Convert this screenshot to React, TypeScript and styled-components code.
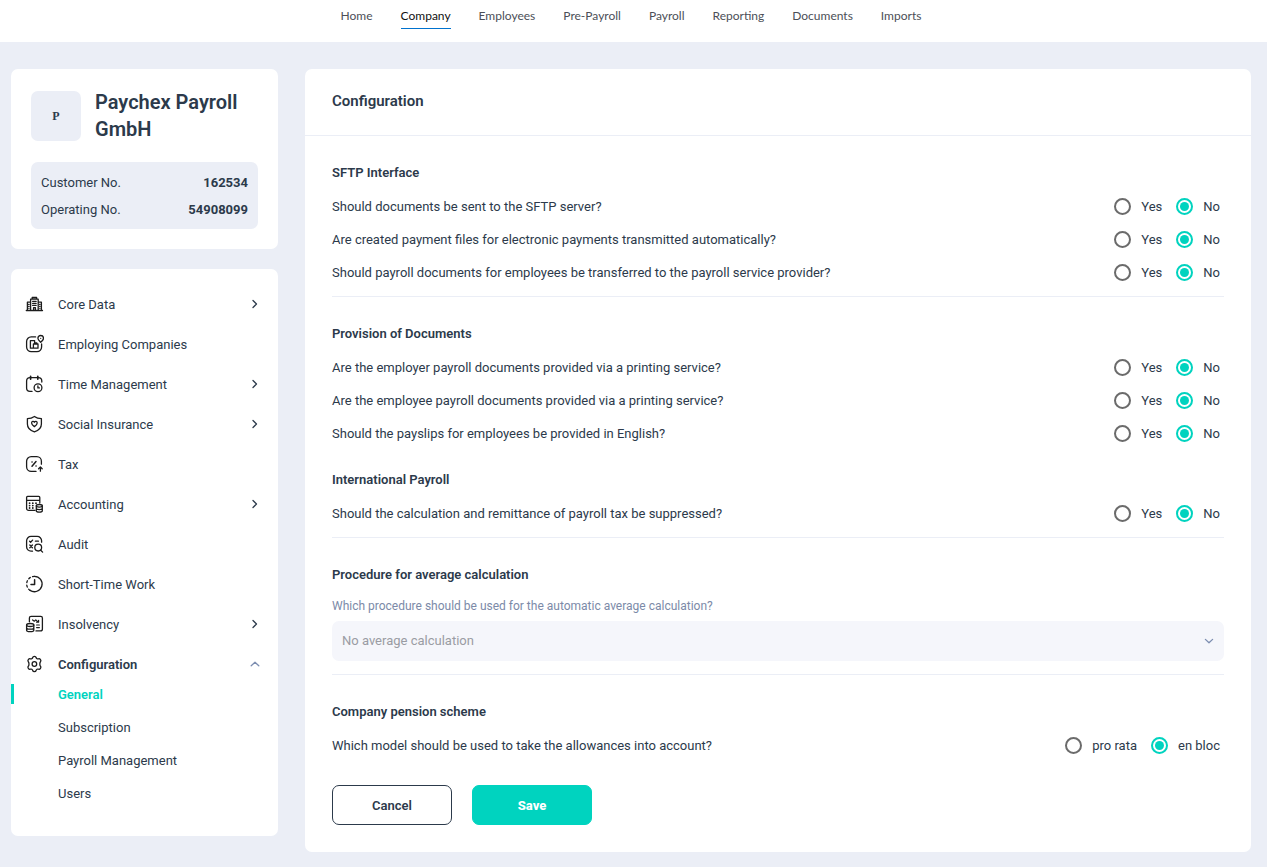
import React, { useState } from "react";
import styled, { createGlobalStyle, css } from "styled-components";

const colors = {
  page: "#ebeef6",
  card: "#ffffff",
  text: "#2c3a4b",
  accent: "#00d3bf",
  muted: "#7c8aa8",
  line: "#ebeef6",
};

const GlobalStyle = createGlobalStyle`
  *, *::before, *::after { box-sizing: border-box; }
  body {
    margin: 0;
    background: ${colors.page};
    color: ${colors.text};
    font-family: Roboto, "Liberation Sans", sans-serif;
    font-size: 13px;
    line-height: 20px;
  }
  ul { list-style: none; margin: 0; padding: 0; }
  a { color: inherit; text-decoration: none; }
`;

const TopBar = styled.header`
  height: 42px;
  background: ${colors.card};
`;

const TopNav = styled.nav`
  display: flex;
  justify-content: center;
  gap: 28px;
  padding-right: 5px;
`;

const TopLink = styled.a<{ $active?: boolean }>`
  padding: 6px 0 2px;
  font-family: Lato, "Liberation Sans", sans-serif;
  font-size: 12px;
  color: ${(p) => (p.$active ? "#111111" : "#4c4f57")};
  border-bottom: 1px solid ${(p) => (p.$active ? "#0072ce" : "transparent")};
`;

const Layout = styled.div`
  display: grid;
  grid-template-columns: 267px minmax(0, 1fr);
  gap: 27px;
  align-items: start;
  padding: 27px 16px 15px 11px;
`;

const Sidebar = styled.aside`
  display: flex;
  flex-direction: column;
  gap: 20px;
`;

const Card = styled.section`
  background: ${colors.card};
  border-radius: 7px;
`;

const CompanyCard = styled(Card)`
  padding: 20px;
`;

const CompanyHead = styled.div`
  display: flex;
  align-items: center;
  gap: 14px;
  margin-bottom: 19px;
`;

const CompanyBadge = styled.div`
  display: grid;
  place-items: center;
  flex: none;
  width: 50px;
  height: 50px;
  border-radius: 7px;
  background: ${colors.page};
  font-family: "Liberation Serif", serif;
  font-size: 12px;
  font-weight: 700;
`;

const CompanyName = styled.h1`
  margin: 0;
  font-size: 20px;
  line-height: 27px;
  font-weight: 600;
`;

const Facts = styled.dl`
  margin: 0;
  padding: 7px 10px 6px;
  border-radius: 7px;
  background: ${colors.page};
`;

const Fact = styled.div`
  display: flex;
  justify-content: space-between;
  line-height: 27px;
  dd { margin: 0; font-weight: 700; }
`;

const MenuCard = styled(Card)`
  padding: 15px 0 33px;
`;

const MenuLink = styled.a<{ $open?: boolean }>`
  display: flex;
  align-items: center;
  gap: 14px;
  height: 40px;
  padding: 0 18px 0 13px;
  font-weight: ${(p) => (p.$open ? 600 : 400)};
`;

const MenuLabel = styled.span`
  flex: 1;
  padding-top: 2px;
`;

const SubMenu = styled.ul`
  display: flex;
  flex-direction: column;
  gap: 13px;
`;

const SubLink = styled.a<{ $active?: boolean }>`
  display: block;
  height: 20px;
  line-height: 22px;
  padding-left: 44px;
  border-left: 3px solid transparent;
  ${(p) =>
    p.$active &&
    css`
      color: ${colors.accent};
      border-left-color: ${colors.accent};
      font-weight: 600;
    `}
`;

const CardHeader = styled.header`
  padding: 21px 27px 23px;
  border-bottom: 1px solid ${colors.line};
`;

const CardTitle = styled.h2`
  margin: 0;
  font-size: 15px;
  line-height: 22px;
  font-weight: 600;
`;

const Form = styled.form`
  padding: 0 27px 27px;
`;

const Group = styled.div<{ $divided?: boolean }>`
  padding-top: 20px;
  ${(p) =>
    p.$divided &&
    css`
      padding-bottom: 7px;
      border-bottom: 1px solid ${colors.line};
    `}
`;

const SelectGroup = styled(Group)`
  padding-bottom: 13px;
  border-bottom: 1px solid ${colors.line};
`;

const GroupTitle = styled.h3<{ $spaced?: boolean }>`
  margin: ${(p) => (p.$spaced ? "13px" : "0")} 0 0;
  font-size: 13px;
  line-height: 34px;
  font-weight: 600;
`;

const QuestionRow = styled.div`
  display: flex;
  align-items: center;
  justify-content: space-between;
  height: 33px;
`;

const Options = styled.div`
  display: flex;
  gap: 14px;
  padding-right: 4px;
`;

const OptionLabel = styled.label`
  display: flex;
  align-items: center;
  gap: 10px;
`;

const Radio = styled.input`
  appearance: none;
  width: 17px;
  height: 17px;
  margin: 0;
  padding: 2px;
  border: 2px solid #6b6b6b;
  border-radius: 50%;
  background-clip: content-box;
  &:checked {
    border-color: ${colors.accent};
    background-color: ${colors.accent};
  }
`;

const FieldLabel = styled.label`
  display: block;
  font-size: 12px;
  line-height: 29px;
  color: ${colors.muted};
`;

const SelectBox = styled.div`
  display: grid;
  align-items: center;
  > * { grid-area: 1 / 1; }
  > svg { justify-self: end; margin-right: 10px; pointer-events: none; }
`;

const Select = styled.select`
  appearance: none;
  width: 100%;
  height: 40px;
  padding: 0 10px;
  border: 0;
  border-radius: 7px;
  background: #f5f6fb;
  color: #9a9ca3;
  font: inherit;
  opacity: 1;
`;

const Actions = styled.div`
  display: flex;
  gap: 20px;
  margin-top: 23px;
`;

const Button = styled.button<{ $primary?: boolean }>`
  width: 120px;
  height: 40px;
  padding: 2px 0 0;
  border: 1px solid ${(p) => (p.$primary ? colors.accent : colors.text)};
  border-radius: 7px;
  background: ${(p) => (p.$primary ? colors.accent : colors.card)};
  color: ${(p) => (p.$primary ? "#ffffff" : colors.text)};
  font: inherit;
  font-weight: ${(p) => (p.$primary ? 800 : 600)};
`;

const Glyph = styled.svg`
  flex: none;
  fill: none;
  stroke: #1c1c1c;
  stroke-width: 1.3;
  stroke-linecap: round;
  stroke-linejoin: round;
`;

const Icon = ({ children }: { children: React.ReactNode }) => (
  <Glyph width="20" height="20" viewBox="0 0 20 20" aria-hidden="true">
    {children}
  </Glyph>
);

const chevrons = { right: "M3 1.5 6.5 5 3 8.5", up: "M1.2 6.8 5 3.2 8.8 6.8", down: "M1.4 3.4 5 6.8 8.6 3.4" };

const ChevronGlyph = styled(Glyph)<{ $dark: boolean }>`
  stroke: ${(p) => (p.$dark ? colors.text : "#7c8db0")};
`;

const Chevron = ({ dir }: { dir: keyof typeof chevrons }) => (
  <ChevronGlyph $dark={dir === "right"} width="10" height="10" viewBox="0 0 10 10" aria-hidden="true">
    <path d={chevrons[dir]} />
  </ChevronGlyph>
);

const icons = {
  core: (
    <Icon>
      <path d="M2.300 16.500h16.200M3.400 16.200V8.200h3.100M17.400 16.200V8.200h-3.100M6.600 16.200V5.200h7.600v11M8.200 5V3.500h4.400V5M9.600 16v-2.400h1.800V16" />
      <path d="M8.600 7.400h3.600M8.600 9.400h3.600M8.600 11.400h3.600M4.600 10.400h.6M4.600 12.400h.6M4.600 14.300h.6M15.600 10.400h.6M15.600 12.400h.6M15.600 14.300h.6" strokeWidth="1.1" />
    </Icon>
  ),
  companies: (
    <Icon>
      <path d="M11.600 2.900H7.200a4.600 4.600 0 0 0-4.600 4.600v5.600a4.600 4.600 0 0 0 4.600 4.600h5.800a4.600 4.600 0 0 0 4.600-4.600V10" />
      <path d="M16.700 8.200c-1.600-1.500-2.800-2.400-2.800-3.900a2.800 2.800 0 0 1 5.600 0c0 1.500-1.200 2.400-2.800 3.900Z" />
      <path d="M16.700 4.300h.01" />
      <path d="M6.400 14.200V6.600h4.200v3.200M6.400 14.200h7.600v-4.200H9.400v4.200M10.600 9.800V8.800h2.200v1" />
    </Icon>
  ),
  time: (
    <Icon>
      <path d="M8 17.400H6a3.400 3.400 0 0 1-3.400-3.400V7A3.400 3.400 0 0 1 6 3.700h8.400A3.400 3.400 0 0 1 17.800 7v1" />
      <path d="M6.600 2.300v2.800M13.800 2.300v2.800" strokeWidth="1.700" />
      <circle cx="14" cy="13.700" r="3.900" />
      <path d="M13.900 11.900v2h1.500" />
    </Icon>
  ),
  shield: (
    <Icon>
      <path d="M10.400 2.400c2 1.500 4.300 2.200 7 2.300v5.200c0 4-2.700 6.500-7 7.900-4.300-1.400-7-3.900-7-7.900V4.700c2.700-.1 5-.8 7-2.300Z" />
      <path d="M10.400 12.600C8.600 11.300 7.600 10.300 7.600 9c0-1.700 2-2.100 2.800-.7.800-1.400 2.800-1 2.800.7 0 1.300-1 2.300-2.800 3.600Z" />
    </Icon>
  ),
  tax: (
    <Icon>
      <path d="M12 17.400H7.200a4.600 4.600 0 0 1-4.600-4.600V7.200a4.600 4.600 0 0 1 4.600-4.600h5.600a4.600 4.600 0 0 1 4.600 4.600v3" />
      <path d="M12 7.600 8 12.200M8 8h.1M12 12h.1" strokeWidth="1.500" />
      <path d="M16.400 17.200v-4M14.600 14.700l1.800-1.800 1.800 1.800" />
    </Icon>
  ),
  accounting: (
    <Icon>
      <path d="M11 16.400H4.600a2 2 0 0 1-2-2V3.400a1 1 0 0 1 1-1h11.200a1 1 0 0 1 1 1V9M2.600 6.300h13.200" />
      <path d="M5.600 9.200h.01M8.800 9.200h.01M12 9.200h.01M5.600 11.600h.01M8.800 11.600h.01M5.600 14h.01M8.800 14h.01" strokeWidth="1.800" />
      <ellipse cx="15.300" cy="11.800" rx="3" ry="1.300" />
      <path d="M12.300 11.800v5c0 .8 1.300 1.400 3 1.400s3-.6 3-1.400v-5M12.300 14.300c0 .8 1.300 1.300 3 1.300s3-.5 3-1.300" />
    </Icon>
  ),
  audit: (
    <Icon>
      <path d="M8.500 17.200H7a4.400 4.400 0 0 1-4.400-4.400V6.800A4.400 4.400 0 0 1 7 2.400h6.200a4.400 4.400 0 0 1 4.400 4.400v1.400" />
      <path d="m5.600 7.300 1 1 2-2.200M11.400 7.200h3M5.800 11l2.600 2.800M8.400 11l-2.600 2.800" />
      <circle cx="14.200" cy="13.600" r="3.400" />
      <path d="m16.700 16.200 1.900 1.900" />
    </Icon>
  ),
  clock: (
    <Icon>
      <path d="M10.400 2.300a7.700 7.700 0 1 1-4.300 14.100" />
      <path d="M6.100 16.400A7.700 7.700 0 0 1 6.100 3.600a7.700 7.700 0 0 1 4.300-1.300" strokeDasharray="2 2.400" />
      <path d="M10.600 5.800v4.600H7" strokeWidth="1.500" />
    </Icon>
  ),
  insolvency: (
    <Icon>
      <path d="M5.400 7.800V4a1.700 1.700 0 0 1 1.700-1.700h9.600A1.700 1.700 0 0 1 18.400 4v10.900a2 2 0 0 1-2 2H12" />
      <path d="m8.600 5.900 1.700 1.300 1.500-1.300 2.600 2.200M14.600 6.300v1.900h-2M12.600 11h2.800M12.600 13.600h2.800" strokeWidth="1.200" />
      <ellipse cx="6.200" cy="11" rx="3.600" ry="1.500" />
      <path d="M2.600 11v5.200c0 .9 1.600 1.500 3.600 1.500s3.600-.6 3.600-1.500V11M2.600 13.700c0 .9 1.600 1.500 3.600 1.500s3.600-.6 3.600-1.500" />
    </Icon>
  ),
  gear: (
    <Icon>
      <path d="M8.700 3.500c.4-1.500 3-1.500 3.400 0 .3 1.200 1.300 1.700 2.400 1.300 1.500-.5 3.100 1.800 2 2.900-.9.900-.9 3.700 0 4.600 1.100 1.100-.5 3.400-2 2.900-1.100-.4-2.100.1-2.400 1.300-.4 1.500-3 1.500-3.400 0-.3-1.200-1.300-1.700-2.400-1.300-1.500.5-3.100-1.800-2-2.900.9-.9.900-3.700 0-4.600-1.100-1.100.5-3.400 2-2.900 1.100.4 2.100-.1 2.400-1.300Z" />
      <circle cx="10.400" cy="10" r="2.300" />
    </Icon>
  ),
};

const topLinks = ["Home", "Company", "Employees", "Pre-Payroll", "Payroll", "Reporting", "Documents", "Imports"];

const menu: { label: string; icon: keyof typeof icons; chevron?: "right" | "up" }[] = [
  { label: "Core Data", icon: "core", chevron: "right" },
  { label: "Employing Companies", icon: "companies" },
  { label: "Time Management", icon: "time", chevron: "right" },
  { label: "Social Insurance", icon: "shield", chevron: "right" },
  { label: "Tax", icon: "tax" },
  { label: "Accounting", icon: "accounting", chevron: "right" },
  { label: "Audit", icon: "audit" },
  { label: "Short-Time Work", icon: "clock" },
  { label: "Insolvency", icon: "insolvency", chevron: "right" },
  { label: "Configuration", icon: "gear", chevron: "up" },
];

const subMenu = ["General", "Subscription", "Payroll Management", "Users"];

const Question = ({ name, text, options = ["Yes", "No"] }: { name: string; text: string; options?: string[] }) => {
  const [value, setValue] = useState(options[1]);
  return (
    <QuestionRow role="radiogroup" aria-labelledby={`${name}-text`}>
      <span id={`${name}-text`}>{text}</span>
      <Options>
        {options.map((option) => (
          <OptionLabel key={option}>
            <Radio type="radio" name={name} checked={value === option} onChange={() => setValue(option)} />
            {option}
          </OptionLabel>
        ))}
      </Options>
    </QuestionRow>
  );
};

export default function App() {
  return (
    <>
      <GlobalStyle />
      <TopBar>
        <TopNav>
          {topLinks.map((label) => (
            <TopLink key={label} href="#" $active={label === "Company"}>
              {label}
            </TopLink>
          ))}
        </TopNav>
      </TopBar>
      <Layout>
        <Sidebar>
          <CompanyCard>
            <CompanyHead>
              <CompanyBadge>P</CompanyBadge>
              <CompanyName>Paychex Payroll GmbH</CompanyName>
            </CompanyHead>
            <Facts>
              <Fact>
                <dt>Customer No.</dt>
                <dd>162534</dd>
              </Fact>
              <Fact>
                <dt>Operating No.</dt>
                <dd>54908099</dd>
              </Fact>
            </Facts>
          </CompanyCard>
          <MenuCard as="nav">
            <ul>
              {menu.map((item) => (
                <li key={item.label}>
                  <MenuLink href="#" $open={item.chevron === "up"}>
                    {icons[item.icon]}
                    <MenuLabel>{item.label}</MenuLabel>
                    {item.chevron && <Chevron dir={item.chevron} />}
                  </MenuLink>
                </li>
              ))}
            </ul>
            <SubMenu>
              {subMenu.map((label) => (
                <li key={label}>
                  <SubLink href="#" $active={label === "General"}>
                    {label}
                  </SubLink>
                </li>
              ))}
            </SubMenu>
          </MenuCard>
        </Sidebar>
        <Card as="main">
          <CardHeader>
            <CardTitle>Configuration</CardTitle>
          </CardHeader>
          <Form onSubmit={(e) => e.preventDefault()}>
            <Group $divided>
              <GroupTitle>SFTP Interface</GroupTitle>
              <Question name="sftp-documents" text="Should documents be sent to the SFTP server?" />
              <Question
                name="sftp-payments"
                text="Are created payment files for electronic payments transmitted automatically?"
              />
              <Question
                name="sftp-payroll"
                text="Should payroll documents for employees be transferred to the payroll service provider?"
              />
            </Group>
            <Group $divided>
              <GroupTitle>Provision of Documents</GroupTitle>
              <Question
                name="print-employer"
                text="Are the employer payroll documents provided via a printing service?"
              />
              <Question
                name="print-employee"
                text="Are the employee payroll documents provided via a printing service?"
              />
              <Question name="english" text="Should the payslips for employees be provided in English?" />
              <GroupTitle $spaced>International Payroll</GroupTitle>
              <Question
                name="suppress-tax"
                text="Should the calculation and remittance of payroll tax be suppressed?"
              />
            </Group>
            <SelectGroup>
              <GroupTitle>Procedure for average calculation</GroupTitle>
              <FieldLabel htmlFor="average">
                Which procedure should be used for the automatic average calculation?
              </FieldLabel>
              <SelectBox>
                <Select id="average" disabled>
                  <option>No average calculation</option>
                </Select>
                <Chevron dir="down" />
              </SelectBox>
            </SelectGroup>
            <Group>
              <GroupTitle>Company pension scheme</GroupTitle>
              <Question
                name="pension"
                text="Which model should be used to take the allowances into account?"
                options={["pro rata", "en bloc"]}
              />
            </Group>
            <Actions>
              <Button type="button">Cancel</Button>
              <Button type="submit" $primary>
                Save
              </Button>
            </Actions>
          </Form>
        </Card>
      </Layout>
    </>
  );
}
